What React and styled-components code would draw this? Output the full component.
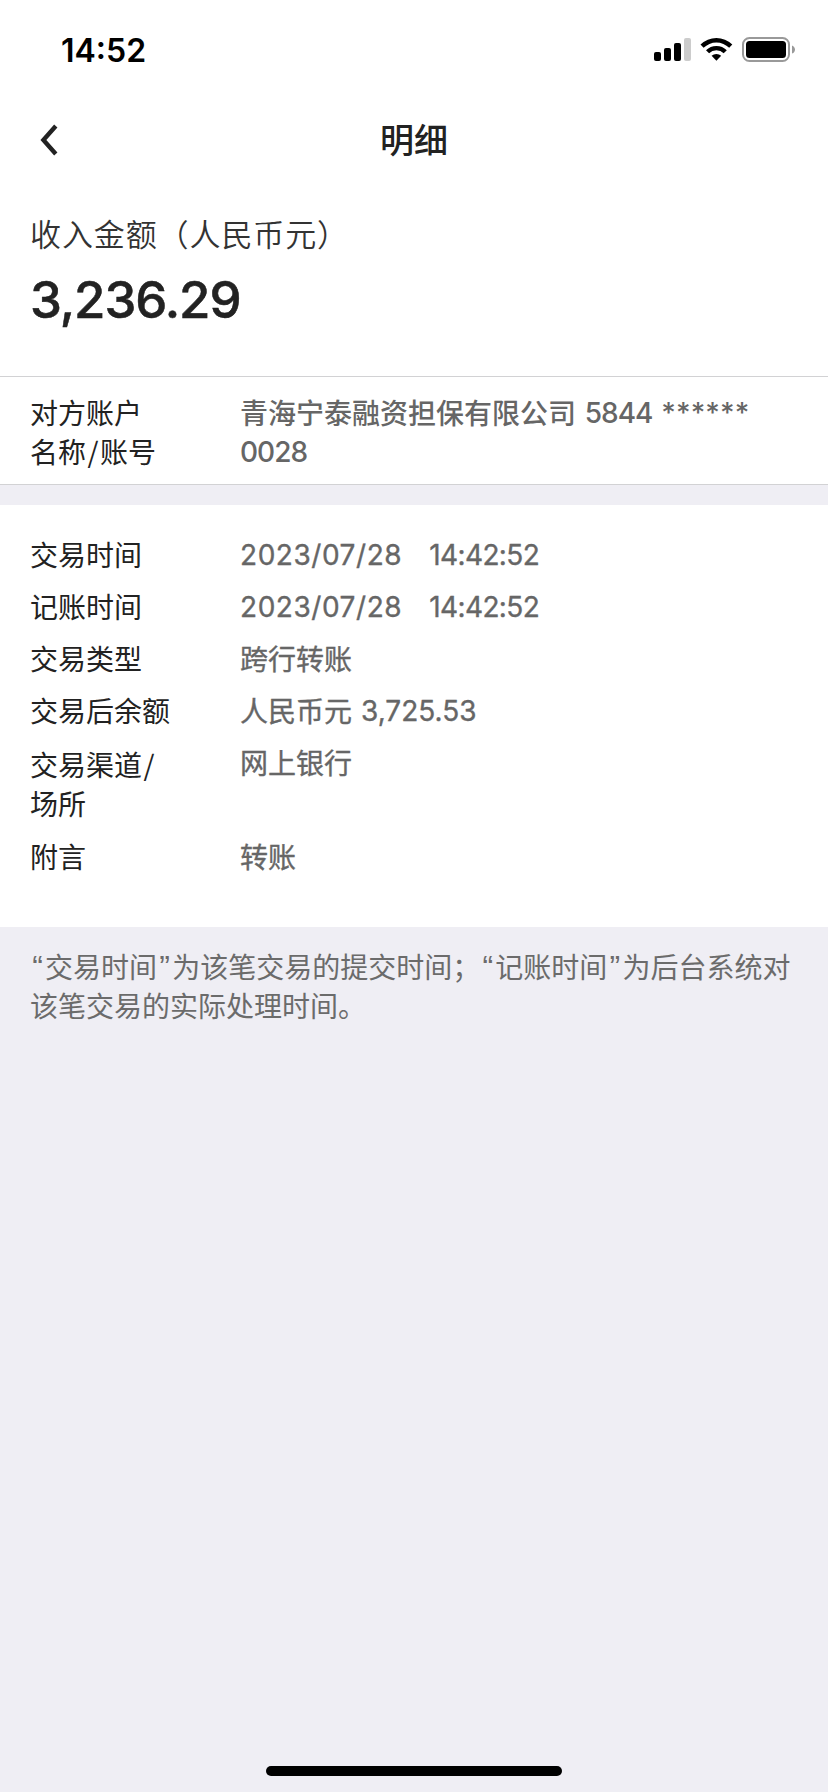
import React from "react";
import styled, { createGlobalStyle } from "styled-components";

const details = [
  { label: "交易时间", date: "2023/07/28", time: "14:42:52" },
  { label: "记账时间", date: "2023/07/28", time: "14:42:52" },
  { label: "交易类型", value: "跨行转账" },
  { label: "交易后余额", value: "人民币元", amount: "3,725.53" },
  { label: ["交易渠道", "场所"], value: "网上银行", tall: true },
  { label: "附言", value: "转账" },
];

const App = () => {
  return (
    <Page>
      <GlobalStyle />
      {/* Status bar */}
      <StatusBar>
        <Clock>14:52</Clock>
        <StatusIcons width="142" height="26" viewBox="0 0 142 26">
          <rect x="0" y="15" width="7" height="9" rx="2" />
          <rect x="10" y="11" width="7" height="13" rx="2" />
          <rect x="20" y="6" width="7" height="18" rx="2" />
          <rect x="30" y="1" width="7" height="23" rx="2" fill="#ccc" />
          <path d="M46.5 7.6 A22.5 22.5 0 0 1 78.3 7.6 L75.2 10.8 A18.2 18.2 0 0 0 49.6 10.8 Z" />
          <path d="M52 13.2 A14.8 14.8 0 0 1 72.8 13.2 L69.7 16.3 A10.4 10.4 0 0 0 55.1 16.3 Z" />
          <path d="M57.6 18.8 A7 7 0 0 1 67.2 18.8 L62.4 23.8 Z" />
          <rect x="89" y="1" width="46" height="23" rx="6.5" fill="none" stroke="#999" strokeWidth="2" />
          <rect x="92" y="4" width="40" height="17" rx="3.5" />
          <path d="M138 8.4 C142 10 142 15 138 16.6 Z" fill="#999" />
        </StatusIcons>
      </StatusBar>

      {/* Title bar */}
      <NavBar>
        <BackButton aria-label="返回">
          <svg width="18" height="32" viewBox="0 0 18 32" fill="none">
            <path d="M15.8 2 L3.4 16 L15.8 30" stroke="#222" strokeWidth="4.4" />
          </svg>
        </BackButton>
        <Title>明细</Title>
      </NavBar>

      <Summary>
        <SummaryLabel>收入金额（人民币元）</SummaryLabel>
        <Amount>3,236.29</Amount>
      </Summary>

      <Account>
        <Label>
          对方账户
          <br />
          名称<Slash>/</Slash>账号
        </Label>
        <Value $bold>
          青海宁泰融资担保有限公司 <Digits>5844</Digits> <Stars>******</Stars>
          <br />
          <Digits>0028</Digits>
        </Value>
      </Account>

      <Details>
        {details.map((item) => (
          <Row key={item.value || item.label} $tall={item.tall}>
            {item.tall ? (
              <Label $tall>
                {item.label[0]}
                <Slash>/</Slash>
                <br />
                {item.label[1]}
              </Label>
            ) : (
              <Label>{item.label}</Label>
            )}
            <Value>
              {item.value}
              {item.date && <DateText>{item.date}</DateText>}
              {item.time && <TimeText>{item.time}</TimeText>}
              {item.amount && <Balance>{item.amount}</Balance>}
            </Value>
          </Row>
        ))}
      </Details>

      <Note>
        <Quote>“</Quote>交易时间<Quote>”</Quote>为该笔交易的提交时间；<Quote>“</Quote>
        记账时间<Quote>”</Quote>为后台系统对
        <br />
        该笔交易的实际处理时间。
      </Note>

      <HomeIndicator />
    </Page>
  );
};

export default App;

// Styled Components
const GlobalStyle = createGlobalStyle`
  * {
    box-sizing: border-box;
  }

  body {
    margin: 0;
    background: #efeef4;
  }
`;

const Page = styled.div`
  display: flex;
  flex-direction: column;
  width: 828px;
  height: 1792px;
  background: #efeef4;
  color: #222;
  font-family: "Noto Sans CJK SC", sans-serif;
  font-size: 28px;
  line-height: 39px;
`;

const StatusBar = styled.div`
  display: flex;
  justify-content: space-between;
  height: 96px;
  padding: 37px 32px 0 61px;
  background: #fff;
`;

const Clock = styled.div`
  font-family: Inter, sans-serif;
  font-size: 32px;
  font-weight: 600;
  line-height: 27px;
  color: #000;
`;

const StatusIcons = styled.svg`
  display: block;
`;

const NavBar = styled.div`
  display: grid;
  grid-template-columns: 100px 1fr 100px;
  align-items: center;
  height: 88px;
  background: #fff;
`;

const BackButton = styled.button`
  display: flex;
  padding: 0 0 0 40px;
  border: none;
  background: none;
`;

const Title = styled.h1`
  margin: 0 0 2px;
  font-size: 34px;
  font-weight: 500;
  line-height: 48px;
  text-align: center;
`;

const Summary = styled.section`
  height: 193px;
  padding: 26px 30px 0;
  border-bottom: 1px solid #d2d2d4;
  background: #fff;
`;

const SummaryLabel = styled.div`
  font-size: 31px;
  font-weight: 350;
  line-height: 46px;
  letter-spacing: 0.9px;
  color: #333;
`;

const Amount = styled.div`
  margin-top: 12px;
  font-family: Inter, sans-serif;
  font-size: 51px;
  font-weight: 500;
  line-height: 64px;
  letter-spacing: -1.1px;
  -webkit-text-stroke: 0.5px;
`;

const Account = styled.section`
  display: flex;
  height: 108px;
  padding: 16px 30px 0;
  border-bottom: 1px solid #d2d2d4;
  background: #fff;
`;

const Label = styled.div`
  flex: none;
  width: 150px;
  margin-right: 60px;
  padding-top: ${({ $tall }) => ($tall ? "2px" : "0")};
`;

const Slash = styled.span`
  padding: 0 1.5px;
`;

const Value = styled.div`
  flex: 1;
  font-weight: ${({ $bold }) => ($bold ? 500 : 400)};
  color: #666;
  white-space: nowrap;
  word-spacing: 2.5px;
  -webkit-text-stroke: ${({ $bold }) => ($bold ? "0" : "0.35px")};
`;

const Digits = styled.span`
  font-family: Inter, sans-serif;
  font-weight: 500;
  line-height: 1;
  letter-spacing: -1px;
  vertical-align: 1px;
`;

const Stars = styled(Digits)`
  letter-spacing: 0.1px;
`;

const DateText = styled(Digits)`
  margin-right: 27px;
  font-weight: 400;
  letter-spacing: 0.55px;
`;

const TimeText = styled(Digits)`
  font-weight: 400;
  letter-spacing: -0.6px;
`;

const Balance = styled(Digits)`
  margin-left: 9px;
  font-weight: 400;
  letter-spacing: 0;
`;

const Details = styled.section`
  height: 422px;
  margin-top: 20px;
  padding-top: 30px;
  background: #fff;
`;

const Row = styled.div`
  display: flex;
  height: ${({ $tall }) => ($tall ? "94px" : "52px")};
  padding: 0 30px;
`;

const Note = styled.p`
  margin: 20px 30px 0;
  color: #6b6b6b;
  white-space: nowrap;
`;

const Quote = styled.span`
  display: inline-block;
  width: 15.1px;
  font-family: "Liberation Sans", sans-serif;
  font-size: 32px;
  line-height: 28px;
  text-align: center;
`;

const HomeIndicator = styled.div`
  width: 296px;
  height: 10px;
  margin: auto auto 16px;
  border-radius: 5px;
  background: #000;
`;
